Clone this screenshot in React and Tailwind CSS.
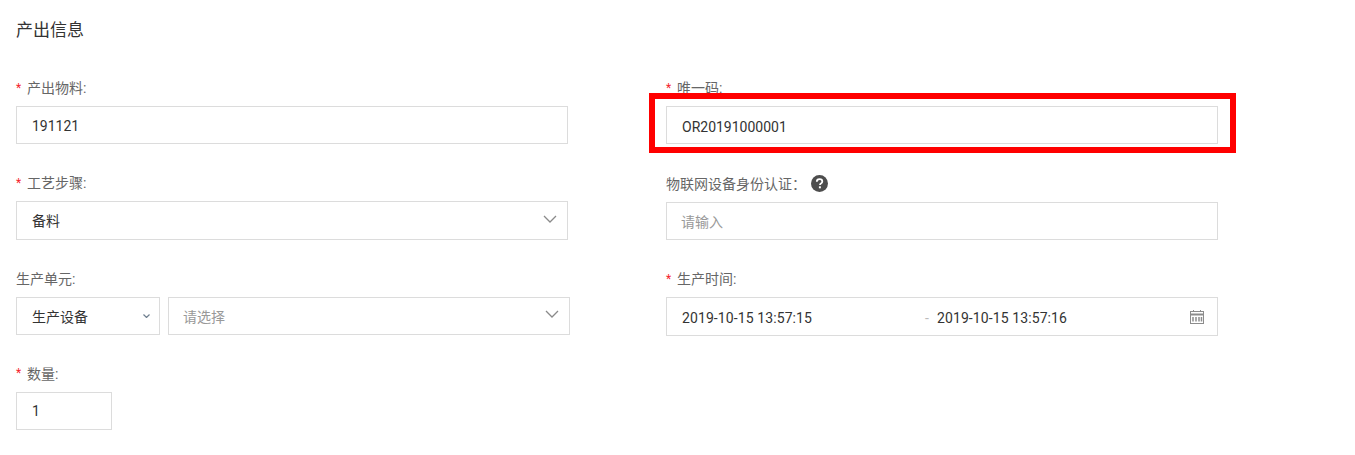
import React from "react";

const inputBox =
  "flex items-center h-[38px] border border-[#dcdcdc] bg-white text-sm text-[#333] pl-[15px]";

function Chevron({ className, color = "#8a8a8a", width = 1.3 }) {
  return (
    <svg viewBox="0 0 14 8" fill="none" stroke={color} strokeWidth={width} className={className}>
      <path d="M1 1l6 6 6-6" />
    </svg>
  );
}

function Field({ label, required, extra, className, children }) {
  return (
    <div className={className}>
      <div className="flex items-center h-5 mb-2 text-sm text-[#666]">
        {required && <span className="w-[11px] text-xs text-[#f5222d] -mt-px">*</span>}
        <span>{label}</span>
        {extra}
      </div>
      {children}
    </div>
  );
}

function HelpIcon() {
  return (
    <svg viewBox="0 0 17 17" className="w-[17px] h-[17px] ml-[5px] -mt-px">
      <circle cx="8.5" cy="8.5" r="8.5" fill="#4d4d4d" />
      <path
        d="M5.8 6.7c0-1.6 1.2-2.5 2.8-2.5s2.7.9 2.7 2.3c0 1.1-.7 1.6-1.4 2.1-.6.4-.9.7-.9 1.4"
        fill="none"
        stroke="#fff"
        strokeWidth="1.8"
      />
      <rect x="7.9" y="11.3" width="2" height="2" fill="#fff" />
    </svg>
  );
}

function CalendarIcon() {
  return (
    <svg viewBox="0 0 14 14" className="w-[14px] h-[14px]" fill="none" stroke="#8c8c8c">
      <rect x=".5" y="1.5" width="13" height="12" />
      <path d="M.5 4.5h13" strokeWidth="2" />
      <path d="M3.5 0v2M10.5 0v2" />
      <path d="M3 7v4.5M6 7v4.5M9 7v4.5M11.5 7v4.5" strokeWidth="1.5" />
    </svg>
  );
}

export default function App() {
  return (
    <div className="w-[1355px] h-[455px] overflow-hidden bg-white px-4 pt-[18px] font-['Roboto','Noto_Sans_CJK_SC',sans-serif]">
      <h2 className="h-[24px] text-[17px] leading-[24px] font-normal text-[#333] mb-[36px]">产出信息</h2>
      <div className="flex gap-[98px]">
        <div className="w-[552px]">
          <Field label="产出物料:" required className="h-[95.25px]">
            <div className={inputBox}>
              <span className="pt-px">191121</span>
            </div>
          </Field>
          <Field label="工艺步骤:" required className="h-[95.25px]">
            <div className={`${inputBox} !h-[38.5px] justify-between pr-[10px]`}>
              <span>备料</span>
              <Chevron className="w-[14px] h-2 mb-1" />
            </div>
          </Field>
          <Field label="生产单元:" className="h-[95.25px]">
            <div className="flex gap-2 w-[554px]">
              <div className={`${inputBox} w-[144px] justify-between pr-[9px]`}>
                <span className="pt-0.5">生产设备</span>
                <Chevron className="w-[7px] h-1" color="#6f7f8f" width={2.4} />
              </div>
              <div className={`${inputBox} flex-1 justify-between pr-[10px]`}>
                <span className="text-[#999] -ml-px pt-0.5">请选择</span>
                <Chevron className="w-[14px] h-2 mb-1" />
              </div>
            </div>
          </Field>
          <Field label="数量:" required className="h-[95.25px]">
            <div className={`${inputBox} w-24`}>
              <span className="pt-px">1</span>
            </div>
          </Field>
        </div>
        <div className="w-[552px]">
          <Field label="唯一码:" required className="h-[95.5px]">
            <div className="relative">
              <div className={inputBox}>
                <span className="pt-1">OR20191000001</span>
              </div>
              <div className="absolute top-[-13px] bottom-[-9px] left-[-17px] right-[-18px] border-[6px] border-[#ff0000]" />
            </div>
          </Field>
          <Field label="物联网设备身份认证：" extra={<HelpIcon />} className="h-[95.5px]">
            <div className={inputBox}>
              <span className="text-[#999] -ml-px pt-0.5">请输入</span>
            </div>
          </Field>
          <Field label="生产时间:" required className="h-[95.5px]">
            <div className={`${inputBox} !h-[39px] pr-[13px]`}>
              <span className="w-[243px] pt-0.5 tracking-[0.1px]">2019-10-15 13:57:15</span>
              <span className="w-[12px] text-[#bbb] pt-0.5">-</span>
              <span className="flex-1 pt-0.5 tracking-[0.1px]">2019-10-15 13:57:16</span>
              <CalendarIcon />
            </div>
          </Field>
        </div>
      </div>
    </div>
  );
}
